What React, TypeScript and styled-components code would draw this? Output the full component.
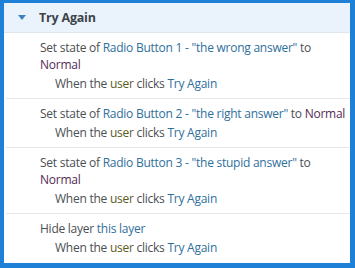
import React from "react";
import styled, { createGlobalStyle } from "styled-components";

const Global = createGlobalStyle`
  html, body { margin: 0; padding: 0; background: #1f80d8; }
  body { font-family: "Open Sans", "Noto Sans", sans-serif; }
`;

const Frame = styled.div`
  width: 355px;
  height: 268px;
  box-sizing: border-box;
  padding: 3px 5px 5px 4px;
  background: #1f80d8;
`;

const Panel = styled.div`
  height: 100%;
  background: #ffffff;
  display: flex;
  flex-direction: column;
  overflow: hidden;
`;

const Header = styled.div`
  flex-shrink: 0;
  height: 29px;
  display: flex;
  align-items: center;
  background: #eaf3fb;
  border-bottom: 1px solid #dfe6ec;
`;

const Caret = styled.span`
  width: 35px;
  display: flex;
  justify-content: center;
  svg { display: block; }
`;

const HeaderTitle = styled.span`
  font-size: 12.5px;
  font-weight: 700;
  color: #3d4449;
  letter-spacing: -0.2px;
`;

const Row = styled.div`
  flex-shrink: 0;
  margin-left: 2px;
  padding: 6px 0 6px 34px;
  border-bottom: 1px solid #e6e6e6;
  font-size: 12px;
  line-height: 17px;
  color: #4b4f53;
  letter-spacing: -0.25px;
  &:last-child { border-bottom: none; }
`;

const Action = styled.div``;

const Trigger = styled.div`
  padding-left: 15px;
  margin-top: 2px;
`;

const Link = styled.span`
  color: #2f6f9b;
`;

const Val = styled.span`
  color: #542a55;
`;

const User = styled.span`
  color: #5c5a1e;
`;

const When = () => (
  <Trigger>
    When the <User>user</User> clicks <Link>Try Again</Link>
  </Trigger>
);

export default function App() {
  return (
    <>
      <Global />
      <Frame>
        <Panel>
          <Header>
            <Caret>
              <svg width="8" height="5" viewBox="0 0 8 5">
                <path d="M0 0 L8 0 L4 5 Z" fill="#3a82c4" />
              </svg>
            </Caret>
            <HeaderTitle>Try Again</HeaderTitle>
          </Header>
          <Row>
            <Action>
              Set state of <Link>Radio Button 1 - "the wrong answer"</Link> to{" "}
              <Val>Normal</Val>
            </Action>
            <When />
          </Row>
          <Row>
            <Action>
              Set state of <Link>Radio Button 2 - "the right answer"</Link> to{" "}
              <Val>Normal</Val>
            </Action>
            <When />
          </Row>
          <Row>
            <Action>
              Set state of <Link>Radio Button 3 - "the stupid answer"</Link> to{" "}
              <Val>Normal</Val>
            </Action>
            <When />
          </Row>
          <Row>
            <Action>
              Hide layer <Link>this layer</Link>
            </Action>
            <When />
          </Row>
        </Panel>
      </Frame>
    </>
  );
}
